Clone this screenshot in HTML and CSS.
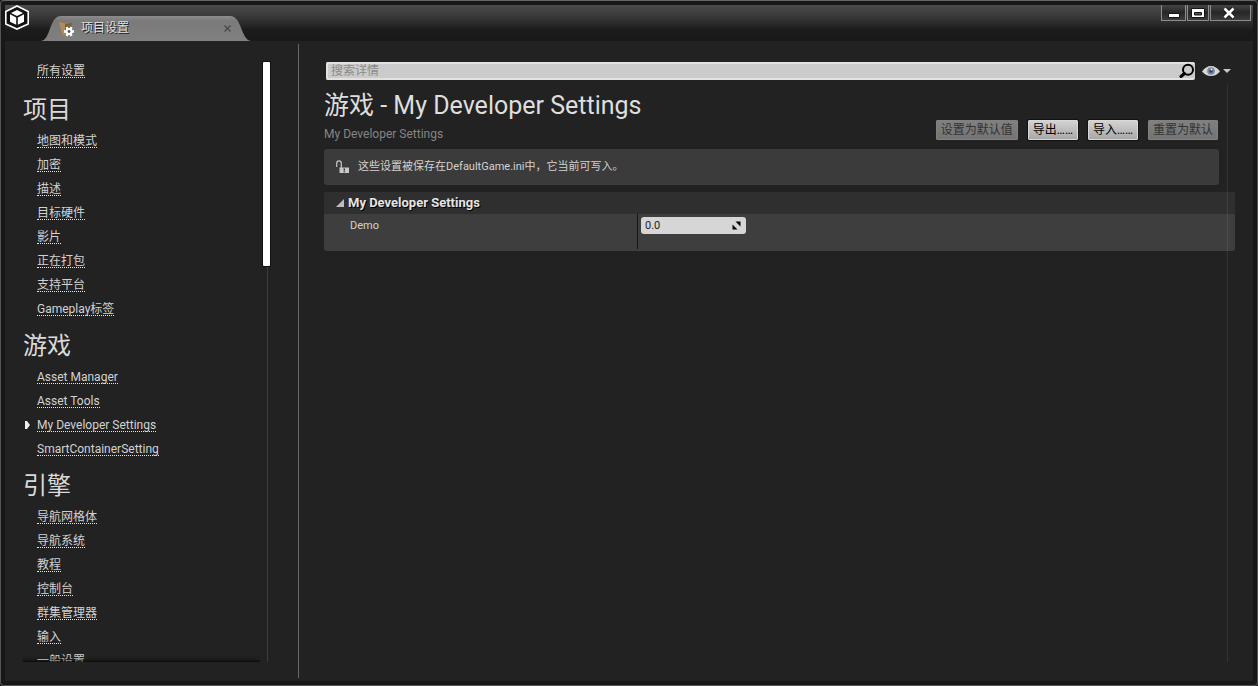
FILE: index.html
```html
<!DOCTYPE html>
<html lang="zh-CN">
<head>
<meta charset="utf-8">
<title>项目设置</title>
<link rel="stylesheet" href="styles.css">
</head>
<body>
<div class="window">
  <header class="titlebar">
    <svg class="logo" width="26" height="26" viewBox="0 0 26 26" aria-hidden="true">
      <path d="M13 1 24.200 6.500v12.500L13 24 1.800 19V6.500z" fill="#111" stroke="#fff" stroke-width="1.600"/>
      <path d="M13 5 19 8 13 11 7 8zM6 9.300 12.200 12.400V19.800L6 16.800zM20 9.300 13.800 12.400V19.800L20 16.800z" fill="#fff"/>
    </svg>
    <div class="tab">
      <svg class="tab-shape" viewBox="0 0 210 25" preserveAspectRatio="none" aria-hidden="true">
        <defs><linearGradient id="tabFill" x1="0" y1="0" x2="0" y2="1"><stop offset="0" stop-color="#8c8c8c"/><stop offset=".2" stop-color="#7a7a7a"/><stop offset="1" stop-color="#808080"/></linearGradient></defs>
        <path d="M0 25C10 24 8 0 20 0H189C201 0 200 24 210 25z" fill="url(#tabFill)"/>
      </svg>
      <svg class="tab-icon" width="17" height="16" viewBox="0 0 17 16" aria-hidden="true">
        <path d="M1 1 14 2 12 13 5 14z" fill="#9b7a50"/>
        <path d="M1 1 7 2.500 7 14 4.500 14z" fill="#b08c5c"/>
        <path d="M7 3 14 2 12.500 9 7 13z" fill="#75603f"/>
        <path d="M6 10.500H16M8.500 6.200 13.500 14.800M13.500 6.200 8.500 14.800" stroke="#fff" stroke-width="2.400"/>
        <circle cx="11" cy="10.500" r="3.600" fill="#fff"/><circle cx="11" cy="10.500" r="1.400" fill="#555"/>
      </svg>
      <span class="tab-label">项目设置</span>
      <button class="tab-close" aria-label="关闭标签"><svg width="7" height="7" viewBox="0 0 7 7"><path d="M.5.5 6.500 6.500M6.500.5.5 6.500" stroke="#484848" stroke-width="1.200"/></svg></button>
    </div>
    <div class="window-buttons">
      <button aria-label="最小化"><svg width="14" height="12" viewBox="0 0 14 12"><path d="M1.500 6.500H12.500V10.500H1.500z" fill="#fff" stroke="#151515"/></svg></button>
      <button aria-label="最大化"><svg width="14" height="12" viewBox="0 0 14 12"><path d="M.5 1.500H13.500V10.500H.5z" fill="#fff" stroke="#151515"/><path d="M3.500 5.500H10.500V8H3.500z" fill="#555" stroke="#151515"/></svg></button>
      <button class="wide" aria-label="关闭"><svg width="14" height="12" viewBox="0 0 14 12"><path d="M2.500 1.500 11.500 10.500M11.500 1.500 2.500 10.500" stroke="#151515" stroke-width="4.500"/><path d="M2.500 1.500 11.500 10.500M11.500 1.500 2.500 10.500" stroke="#fff" stroke-width="2.700"/></svg></button>
    </div>
  </header>

  <div class="content">
    <aside class="sidebar">
      <nav class="nav">
        <ul class="all"><li><a href="#">所有设置</a></li></ul>
        <h2>项目</h2>
        <ul>
          <li><a href="#">地图和模式</a></li>
          <li><a href="#">加密</a></li>
          <li><a href="#">描述</a></li>
          <li><a href="#">目标硬件</a></li>
          <li><a href="#">影片</a></li>
          <li><a href="#">正在打包</a></li>
          <li><a href="#">支持平台</a></li>
          <li><a href="#">Gameplay标签</a></li>
        </ul>
        <h2>游戏</h2>
        <ul>
          <li><a href="#">Asset Manager</a></li>
          <li><a href="#">Asset Tools</a></li>
          <li class="current"><a href="#" aria-current="page">My Developer Settings</a></li>
          <li><a href="#">SmartContainerSetting</a></li>
        </ul>
        <h2>引擎</h2>
        <ul>
          <li><a href="#">导航网格体</a></li>
          <li><a href="#">导航系统</a></li>
          <li><a href="#">教程</a></li>
          <li><a href="#">控制台</a></li>
          <li><a href="#">群集管理器</a></li>
          <li><a href="#">输入</a></li>
          <li><a href="#">一般设置</a></li>
        </ul>
      </nav>
      <div class="scrollbar"><div class="thumb"></div></div>
    </aside>

    <main class="details">
      <div class="search-row">
        <div class="search">
          <input type="text" placeholder="搜索详情" aria-label="搜索详情">
          <svg width="16" height="16" viewBox="0 0 16 16" aria-hidden="true"><circle cx="9" cy="6.800" r="5" fill="none" stroke="#000" stroke-width="2"/><path d="M5.500 10.500 2 13.500" stroke="#000" stroke-width="3" stroke-linecap="round"/></svg>
        </div>
        <button class="view" aria-label="视图选项">
          <svg width="30" height="12" viewBox="0 0 30 12"><path d="M0 6.500Q4 1 9 1T18 6.500Q14 11 9 11T0 6.500z" fill="#d8d8d4"/><circle cx="9" cy="6" r="3.800" fill="#7685a3"/><circle cx="9" cy="6" r="1.700" fill="#2f3d5c"/><circle cx="9.500" cy="4.500" r="1" fill="#e8edf5"/><path d="M21 4H29L25 8z" fill="#c8c8c8"/></svg>
        </button>
      </div>
      <div class="body">
        <div class="heading">
          <div class="titles">
            <h1>游戏 - My Developer Settings</h1>
            <p>My Developer Settings</p>
          </div>
          <div class="actions">
            <button disabled>设置为默认值</button>
            <button>导出……</button>
            <button>导入……</button>
            <button disabled>重置为默认</button>
          </div>
        </div>
        <div class="notice">
          <svg width="14" height="14" viewBox="0 0 14 14" aria-hidden="true"><path d="M.7 7V3.500Q.7.8 3 .8T5.300 3.500V8" fill="none" stroke="#c8c8c8" stroke-width="1.200"/><path d="M3.500 7.500H13V13H3.500z" fill="#c8c8c8"/><path d="M8.300 8.500V10.500M8.300 11.200V12.200" stroke="#333" stroke-width="1.500"/></svg>
          <span>这些设置被保存在DefaultGame.ini中，它当前可写入。</span>
        </div>
        <section class="category">
          <h3><svg width="8" height="8" viewBox="0 0 8 8" aria-hidden="true"><path d="M8 0V8H0z" fill="#bdbdbd"/></svg>My Developer Settings</h3>
          <div class="property">
            <label for="demo">Demo</label>
            <div class="value">
              <div class="spin">
                <input id="demo" type="text" value="0.0">
                <svg width="9" height="9" viewBox="0 0 9 9" aria-hidden="true"><path d="M3.500.5H8.500V5.500zM.5 3.500V8.500H5.500z" fill="#000"/></svg>
              </div>
            </div>
          </div>
        </section>
        <div class="body-track"></div>
      </div>
    </main>
  </div>
</div>
</body>
</html>
```
FILE: styles.css
```css
* {
  box-sizing: border-box;
}

body {
  margin: 0;
  background: #181818;
  color: #d2d2d2;
  font: 12px/16px Roboto, "Noto Sans CJK SC", sans-serif;
}

h1, h2, h3, p, ul {
  margin: 0;
  padding: 0;
  font-weight: 400;
}

ul {
  list-style: none;
}

button {
  padding: 0;
  border: 0;
  background: none;
  color: inherit;
  font: inherit;
}

svg {
  display: block;
  flex: none;
}

.window {
  display: flex;
  flex-direction: column;
  height: 100vh;
  padding: 4px;
  border: 1px solid #555;
  border-top-color: #666;
  border-radius: 4px;
  background: #181818;
}

.titlebar {
  display: flex;
  height: 36px;
  background: linear-gradient(#4c4c4c, #333 40%, #1b1b1b 70%, #191919);
}

.logo {
  margin-left: -1px;
}

.tab {
  position: relative;
  display: flex;
  align-items: center;
  align-self: flex-end;
  width: 210px;
  height: 25px;
  margin-left: 11px;
  padding: 0 20px 0 17px;
}

.tab-shape {
  position: absolute;
  inset: 0;
  width: 100%;
  height: 100%;
}

.tab-icon {
  position: relative;
}

.tab-label {
  position: relative;
  flex: 1;
  margin: 0 6px;
  padding-bottom: 2px;
  color: #dedede;
  text-shadow: 1px 1px 0 #222;
}

.tab-close {
  position: relative;
}

.window-buttons {
  display: flex;
  align-self: flex-start;
  gap: 1px;
  margin-left: auto;
  margin-right: 2px;
}

.window-buttons button {
  display: flex;
  align-items: center;
  justify-content: center;
  width: 25px;
  height: 16px;
  border: 1px solid #8c8c8c;
  border-top: 0;
  background: linear-gradient(#444, #272727 50%, #3c3c3c);
}

.window-buttons button:nth-child(2) {
  width: 22px;
}

.window-buttons .wide {
  width: 41px;
  padding-right: 3px;
}

.content {
  display: flex;
  flex: 1;
  min-height: 0;
  background: #222;
}

.sidebar {
  display: flex;
  justify-content: space-between;
  width: 294px;
  margin: 3px 0;
  padding: 15px 28px 16px 18px;
  border-right: 1px solid #686868;
}

.nav {
  position: relative;
  width: 237px;
  overflow: hidden;
}

.nav::after {
  content: "";
  position: absolute;
  inset: auto 0 0;
  height: 7px;
  background: linear-gradient(transparent, rgba(0, 0, 0, .2) 70%, rgba(0, 0, 0, .7));
}

.nav h2 {
  padding-top: 6px;
  color: #dadada;
  font-size: 24px;
  line-height: 38px;
}

.nav .all {
  padding-bottom: 2px;
}

.nav li {
  display: flex;
  align-items: center;
  height: 24px;
  padding-left: 14px;
}

.nav a {
  height: 14px;
  border-bottom: 1px dotted #e6e6e6;
  color: #d2d2d2;
  line-height: 14px;
  text-decoration: none;
}

.nav .current {
  gap: 7px;
  padding-left: 2px;
}

.nav .current::before {
  content: "";
  width: 5px;
  height: 8px;
  background: #eee;
  clip-path: polygon(0 0, 40% 0, 100% 50%, 40% 100%, 0 100%);
}

.scrollbar {
  width: 7px;
  margin-top: 3px;
  background: linear-gradient(#3c3c3c, #3c3c3c) 4px 0 / 1px 100% no-repeat;
}

.thumb {
  height: 34%;
  border-radius: 1px;
  background: #fff;
  box-shadow: 0 0 0 1px #101010;
}

.details {
  display: flex;
  flex: 1;
  flex-direction: column;
  min-width: 0;
  padding: 21px 18px 19px 25px;
}

.search-row {
  display: flex;
  align-items: center;
  gap: 7px;
  padding: 0 3px 0 2px;
}

.search {
  display: flex;
  flex: 1;
  align-items: center;
  height: 18px;
  border: 2px solid #e2e2e2;
  border-right-width: 0;
  border-radius: 2px;
  background: #cbcbcb;
}

.search input {
  flex: 1;
  min-width: 0;
  padding: 0 3px;
  border: 0;
  background: none;
  color: #222;
  font: inherit;
  line-height: 14px;
}

.search input::placeholder {
  color: #8a8a8a;
}

.body {
  position: relative;
  flex: 1;
  margin-top: 5px;
}

.body-track {
  position: absolute;
  inset: 0 7px 0 auto;
  width: 1px;
  background: rgba(255, 255, 255, .08);
}

.heading {
  display: flex;
  align-items: flex-end;
  justify-content: space-between;
  height: 64px;
  padding: 0 17px 6px 0;
}

.titles h1 {
  color: #dedede;
  font-size: 25px;
  line-height: 32px;
}

.titles p {
  padding-top: 3px;
  color: #858585;
  line-height: 18px;
}

.actions {
  display: flex;
  gap: 10px;
}

.actions button {
  height: 20px;
  margin-bottom: 3px;
  padding: 0 4px;
  border: 1px solid #d8d8d8;
  border-radius: 1px;
  background: linear-gradient(#d2d2d2, #a8a8a8);
  box-shadow: 0 0 0 1px #111;
  color: #000;
  line-height: 18px;
}

.actions button:disabled {
  border-color: #818181;
  background: linear-gradient(#808080, #747474);
  box-shadow: none;
  color: #333;
}

.notice {
  display: flex;
  align-items: center;
  gap: 8px;
  height: 36px;
  margin-right: 16px;
  padding: 0 12px;
  border-radius: 3px;
  background: #3b3b3b;
  font-size: 11px;
}

.category {
  margin-top: 7px;
  overflow: hidden;
  border-radius: 3px;
  background: #3e3e3e;
}

.category h3 {
  display: flex;
  align-items: center;
  gap: 4px;
  height: 22px;
  padding-left: 12px;
  background: #2f2f2f;
  color: #e4e4e4;
  font-size: 13px;
  font-weight: 700;
  text-shadow: 1px 1px 0 #000;
}

.property {
  display: grid;
  grid-template-columns: 313px 1fr;
  height: 37px;
  padding-bottom: 2px;
  font-size: 11px;
}

.property label {
  padding: 4px 0 0 26px;
}

.value {
  padding: 3px;
  border-left: 1px solid #171717;
}

.spin {
  display: flex;
  align-items: center;
  width: 105px;
  height: 17px;
  padding: 0 5px 0 4px;
  border-radius: 3px;
  background: #d6d6d6;
}

.spin input {
  flex: 1;
  min-width: 0;
  padding: 0;
  border: 0;
  background: none;
  color: #222;
  font: inherit;
}
```
